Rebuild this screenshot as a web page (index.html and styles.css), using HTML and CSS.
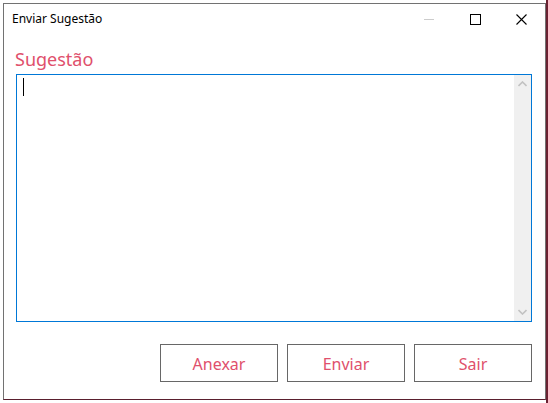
FILE: index.html
```html
<!DOCTYPE html>
<html lang="pt">
<head>
<meta charset="utf-8">
<title>Enviar Sugestão</title>
<link rel="stylesheet" href="styles.css">
</head>
<body>
<div class="window">
  <div class="titlebar">
    <span class="title">Enviar Sugestão</span>
    <div class="controls">
      <span class="ctl min"><svg width="10" height="10" viewBox="0 0 10 10"><path d="M0 5.5H10" stroke="#cccccc" stroke-width="1"/></svg></span>
      <span class="ctl max"><svg width="11" height="11" viewBox="0 0 11 11"><rect x="0.5" y="0.5" width="10" height="10" fill="none" stroke="#000" stroke-width="1"/></svg></span>
      <span class="ctl close"><svg width="11" height="11" viewBox="0 0 11 11"><path d="M0.5 0.5L10.5 10.5M10.5 0.5L0.5 10.5" stroke="#000" stroke-width="1.1"/></svg></span>
    </div>
  </div>
  <div class="content">
    <div class="label">Sugestão</div>
    <div class="textbox">
      <div class="editor"><span class="caret"></span></div>
      <div class="scrollbar">
        <svg class="arrow" width="9" height="6" viewBox="0 0 9 6"><path d="M0.5 5L4.5 1L8.5 5" fill="none" stroke="#c2c2c2" stroke-width="1.6"/></svg>
        <svg class="arrow" width="9" height="6" viewBox="0 0 9 6"><path d="M0.5 1L4.5 5L8.5 1" fill="none" stroke="#c2c2c2" stroke-width="1.6"/></svg>
      </div>
    </div>
    <div class="buttons">
      <button class="btn">Anexar</button>
      <button class="btn">Enviar</button>
      <button class="btn">Sair</button>
    </div>
  </div>
</div>
</body>
</html>
```
FILE: styles.css
```css
html, body {
  margin: 0;
  padding: 0;
}
body {
  width: 548px;
  height: 403px;
  background: linear-gradient(to right, #ffffff 546px, #6a2232 546px);
  font-family: "Noto Sans", "Open Sans", sans-serif;
  overflow: hidden;
}
.window {
  box-sizing: border-box;
  margin: 3px 0 0 3px;
  width: 543px;
  height: 397px;
  background: #ffffff;
  border: 1px solid #727272;
  border-bottom-color: #5a1f2e;
  display: flex;
  flex-direction: column;
}
.titlebar {
  height: 30px;
  display: flex;
  align-items: center;
  justify-content: space-between;
}
.title {
  font-size: 12px;
  color: #000;
  padding-left: 8px;
  padding-bottom: 2px;
}
.controls {
  display: flex;
  height: 30px;
  align-items: center;
  padding-right: 1px;
}
.ctl {
  width: 46px;
  height: 30px;
  display: flex;
  align-items: center;
  justify-content: center;
}
.ctl svg { display: block; }
.content {
  padding: 0 13px 0 12px;
  display: flex;
  flex-direction: column;
}
.label {
  margin: 13px 0 3px -1px;
  height: 24px;
  line-height: 24px;
  font-size: 18px;
  color: #e0506c;
}
.textbox {
  box-sizing: border-box;
  height: 248px;
  border: 1px solid #0078d7;
  display: flex;
}
.editor {
  flex: 1;
  padding: 3px 0 0 6px;
}
.caret {
  display: block;
  width: 1px;
  height: 18px;
  background: #000;
}
.scrollbar {
  width: 17px;
  background: #f0f0f0;
  display: flex;
  flex-direction: column;
  justify-content: space-between;
  align-items: center;
  padding: 6px 0 6px;
}
.arrow { display: block; }
.buttons {
  margin-top: 22px;
  display: flex;
  justify-content: flex-end;
  gap: 9px;
}
.btn {
  box-sizing: border-box;
  width: 118px;
  height: 38px;
  background: #ffffff;
  border: 1px solid #676767;
  font-family: "Noto Sans", "Open Sans", sans-serif;
  font-size: 16px;
  color: #e0506c;
  padding: 2px 0 0;
}
```
